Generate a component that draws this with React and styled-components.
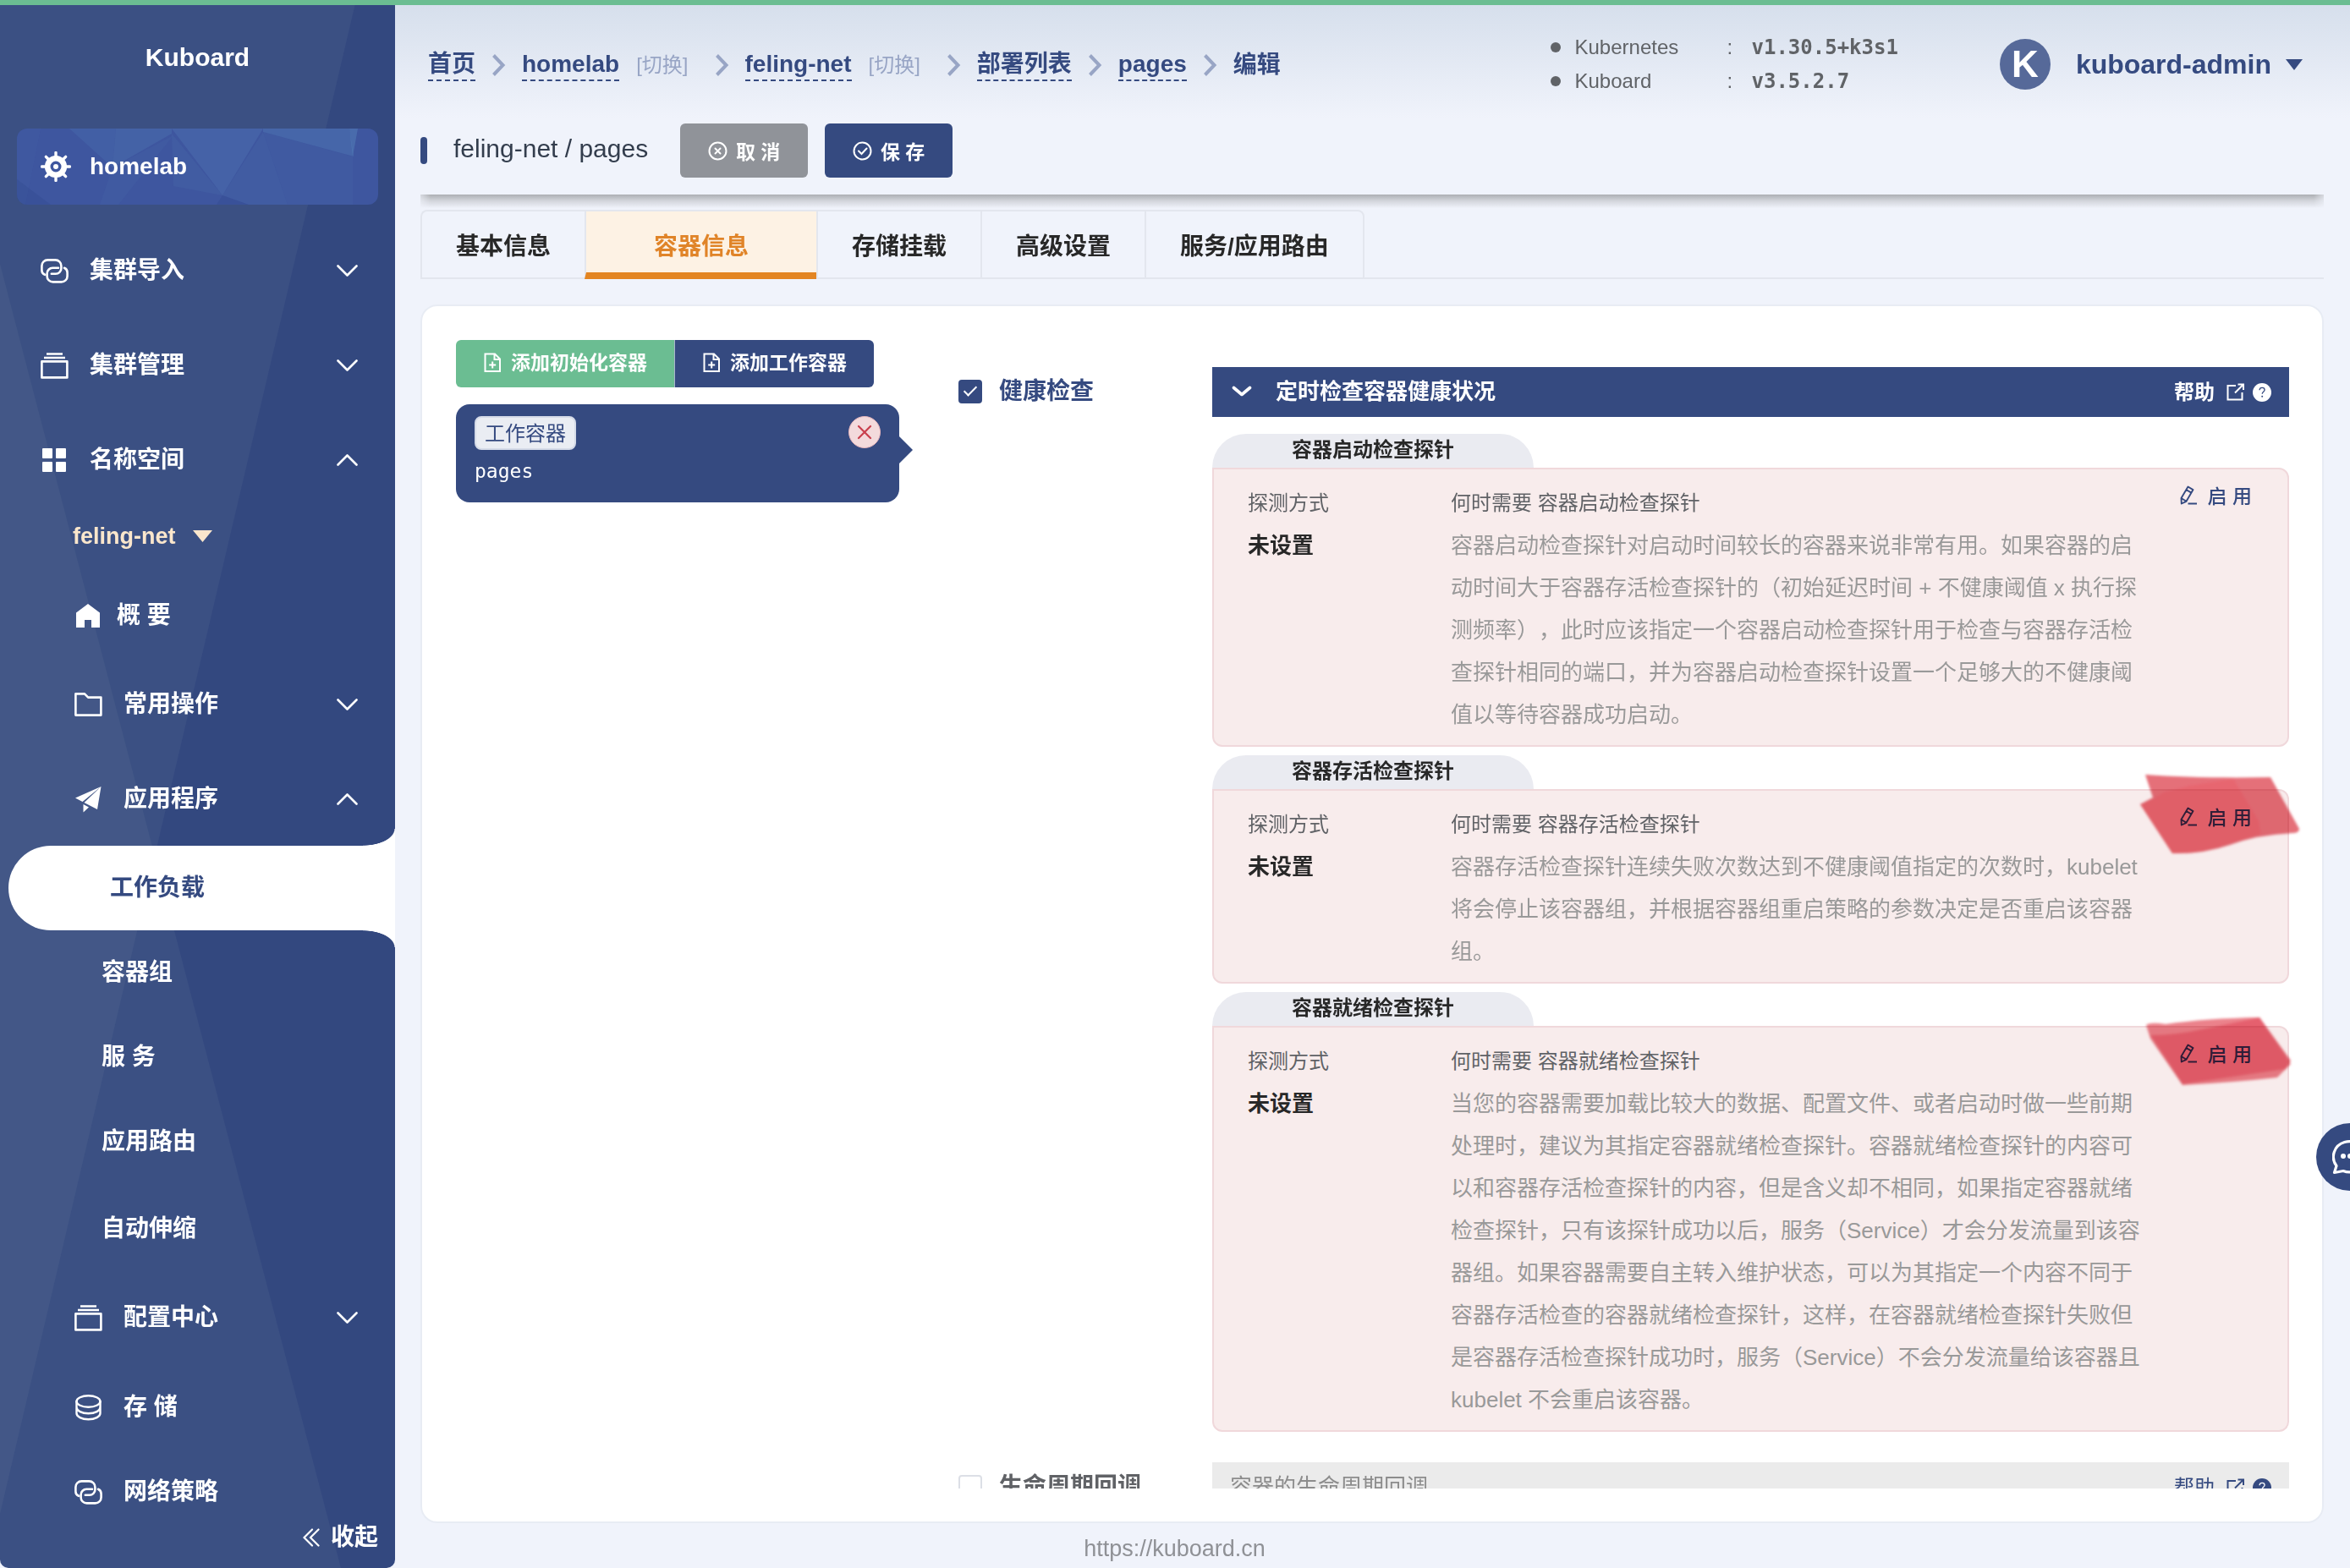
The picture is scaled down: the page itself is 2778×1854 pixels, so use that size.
import React from "react";
import styled, { createGlobalStyle, css } from "styled-components";

const navy = "#354a80";
const sans = `"Liberation Sans", "Noto Sans CJK SC", sans-serif`;
const mono = `"DejaVu Sans Mono", "Noto Sans CJK SC", monospace`;

const GlobalStyle = createGlobalStyle`
  *, *::before, *::after { box-sizing: border-box; }
  body {
    margin: 0;
    background: #f0f3fb;
    color: #282828;
    font-family: ${sans};
    text-spacing-trim: space-all;
  }
  a { color: inherit; text-decoration: none; }
  ul, p, h1, h2, h3 { margin: 0; padding: 0; }
  ul { list-style: none; }
  button { font-family: inherit; border: 0; margin: 0; padding: 0; background: none; cursor: pointer; }
  svg { display: block; flex: none; }
`;

/* ---------- shell ---------- */

const Page = styled.div`
  display: flex;
  flex-direction: column;
  height: 100vh;
  overflow: hidden;
`;

const TopStripe = styled.div`
  flex: none;
  height: 6px;
  background: #6bbd92;
`;

const Shell = styled.div`
  display: flex;
  flex: 1;
  min-height: 0;
`;

const Sidebar = styled.aside`
  position: relative;
  display: flex;
  flex-direction: column;
  flex: none;
  width: 467px;
  overflow: hidden;
  border-radius: 0 0 10px 10px;
  background: #33487f;
  color: #fff;
  font-size: 28px;
  font-weight: 700;
`;

const Facets = styled.svg`
  position: absolute;
  inset: 0;
  width: 100%;
  height: 100%;
`;

const Brand = styled.h1`
  position: relative;
  flex: none;
  padding-top: 42px;
  height: 146px;
  font-size: 30px;
  line-height: 40px;
  text-align: center;
`;

const ClusterLink = styled.a`
  position: relative;
  display: flex;
  align-items: center;
  gap: 22px;
  flex: none;
  height: 90px;
  margin: 0 20px 22px;
  padding-left: 28px;
  border-radius: 12px;
  overflow: hidden;
  background: #3e569f;
  > span, > svg:not(:first-child) { position: relative; }
`;

const Nav = styled.nav`
  position: relative;
  flex: 1;
  min-height: 0;
  overflow: hidden;
`;

const NavRow = styled.a`
  display: flex;
  align-items: center;
  height: ${(p) => p.$height || 112}px;
  padding: ${(p) => (p.$low ? 6 : 0)}px 44px 0 ${(p) => (p.$nested ? 88 : 48)}px;
  line-height: 40px;
`;

const IconSlot = styled.span`
  display: flex;
  justify-content: center;
  width: 32px;
  margin-right: ${(p) => p.$gap || 26}px;
`;

const NavLabel = styled.span`
  flex: 1;
`;

const Namespace = styled.button`
  display: flex;
  align-items: center;
  gap: 20px;
  width: 100%;
  height: 68px;
  margin-bottom: 6px;
  padding-left: 86px;
  color: #fae6cc;
  font-size: 27px;
  font-weight: 700;
`;

const SubLink = styled.a`
  position: relative;
  display: flex;
  align-items: center;
  height: ${(p) => p.$height || 100}px;
  padding-left: 120px;
  line-height: 40px;
  ${(p) =>
    p.$active &&
    css`
      margin-left: 10px;
      border-radius: 50px 0 0 50px;
      background: #fff;
      color: ${navy};
      &::before,
      &::after {
        content: "";
        position: absolute;
        right: 0;
        width: 38px;
        height: 20px;
      }
      &::before {
        bottom: 100%;
        background: radial-gradient(38px 20px at 0 0, transparent 97%, #fff 100%);
      }
      &::after {
        top: 100%;
        background: radial-gradient(38px 20px at 0 100%, transparent 97%, #fff 100%);
      }
    `}
`;

const Collapse = styled.button`
  position: relative;
  display: flex;
  align-items: center;
  justify-content: flex-end;
  gap: 13px;
  flex: none;
  height: 72px;
  padding-right: 20px;
  color: #fff;
  font-size: 28px;
  font-weight: 700;
  line-height: 40px;
`;

/* ---------- header ---------- */

const Main = styled.main`
  display: flex;
  flex-direction: column;
  flex: 1;
  min-width: 0;
  padding: 0 31px 0 30px;
  background: linear-gradient(#d6dfec, #f0f3fb 134px);
`;

const Header = styled.header`
  display: flex;
  align-items: center;
  flex: none;
  height: 140px;
  padding: 0 25px 0 9px;
`;

const Crumbs = styled.nav`
  display: flex;
  align-items: center;
  gap: 18px;
  flex: 1;
  padding-top: 2px;
  color: ${navy};
  font-size: 28px;
  font-weight: 700;
  line-height: 36px;
`;

const CrumbLink = styled.a`
  border-bottom: 2px dashed ${navy};
`;

const Switch = styled.button`
  padding: 0 12px 0 2px;
  color: #98a5c5;
  font-size: 24px;
  line-height: 36px;
`;

const Versions = styled.ul`
  margin-right: 120px;
  color: #606367;
  font-size: 24px;
  line-height: 40px;
`;

const VersionRow = styled.li`
  display: grid;
  grid-template-columns: 28px 180px 29px auto;
  align-items: center;
`;

const Dot = styled.i`
  width: 12px;
  height: 12px;
  border-radius: 50%;
  background: #606367;
`;

const VersionNumber = styled.b`
  font-family: ${mono};
`;

const UserMenu = styled.button`
  display: flex;
  align-items: center;
  gap: 17px;
  color: ${navy};
  font-size: 32px;
  font-weight: 700;
  line-height: 60px;
`;

const Avatar = styled.span`
  width: 60px;
  height: 60px;
  margin-right: 13px;
  border-radius: 50%;
  background: #566999;
  color: #fff;
  font-size: 44px;
  line-height: 60px;
  text-align: center;
`;

const TitleRow = styled.div`
  display: flex;
  align-items: center;
  gap: 20px;
  flex: none;
  height: 64px;
  margin-bottom: 20px;
`;

const Marker = styled.span`
  width: 8px;
  height: 32px;
  margin-right: 11px;
  border-radius: 4px;
  background: ${navy};
`;

const Title = styled.h2`
  margin-right: 18px;
  padding-bottom: 4px;
  color: #333d4d;
  font-size: 30px;
  font-weight: 400;
`;

const ActionButton = styled.button`
  display: flex;
  align-items: center;
  justify-content: center;
  gap: 10px;
  width: 151px;
  height: 64px;
  border-radius: 6px;
  background: ${(p) => (p.$primary ? navy : "#909399")};
  color: #fff;
  font-size: 23px;
  font-weight: 700;
`;

const Shade = styled.div`
  flex: none;
  height: 16px;
  margin-bottom: 2px;
  background: linear-gradient(#acaeb2, rgba(172, 174, 178, 0.45) 45%, rgba(172, 174, 178, 0));
  mask-image: linear-gradient(90deg, rgba(0, 0, 0, 0.4), #000 12px calc(100% - 12px), rgba(0, 0, 0, 0.4));
`;

const Tabs = styled.div`
  display: flex;
  flex: none;
  height: 82px;
  margin-bottom: 30px;
  border-bottom: 2px solid #e3e6ee;
`;

const Tab = styled.button`
  height: 82px;
  padding: 0 ${(p) => (p.$active ? 80 : 40)}px;
  border-top: 2px solid #e3e6ee;
  border-left: 2px solid #e3e6ee;
  border-bottom: 2px solid #e3e6ee;
  color: #282828;
  font-size: 28px;
  font-weight: 700;
  &:first-child { border-top-left-radius: 8px; }
  &:last-child { border-right: 2px solid #e3e6ee; border-top-right-radius: 8px; }
  ${(p) =>
    p.$active &&
    css`
      padding-top: 6px;
      border-bottom: 8px solid #e38522;
      background: #fdf2e4;
      color: #e08428;
    `}
`;

/* ---------- card ---------- */

const Card = styled.section`
  flex: 1;
  min-height: 0;
  padding: 40px 19px 39px 40px;
  border: 2px solid #e8ecf4;
  border-radius: 20px;
  background: #fff;
`;

const CardScroll = styled.div`
  display: grid;
  grid-template-columns: 524px minmax(0, 1fr);
  column-gap: 70px;
  height: 100%;
  padding-right: 20px;
  overflow: hidden;
`;

const AddButtons = styled.div`
  display: flex;
  margin-bottom: 20px;
`;

const AddButton = styled.button`
  display: flex;
  align-items: center;
  gap: 10px;
  height: 56px;
  padding: 0 32px;
  border-radius: ${(p) => (p.$init ? "6px 0 0 6px" : "0 6px 6px 0")};
  border-right: ${(p) => (p.$init ? "1px solid #a9b6cc" : "0")};
  background: ${(p) => (p.$init ? "#6bbd92" : navy)};
  color: #fff;
  font-size: 23px;
  font-weight: 700;
  line-height: 30px;
  padding-bottom: 2px;
  white-space: nowrap;
`;

const ContainerItem = styled.div`
  position: relative;
  display: flex;
  justify-content: space-between;
  align-items: flex-start;
  height: 116px;
  padding: 14px 22px;
  border-radius: 16px;
  background: ${navy};
  &::after {
    content: "";
    position: absolute;
    left: 100%;
    top: 38px;
    border: 16px solid transparent;
    border-right: 0;
    border-left-color: ${navy};
  }
`;

const ContainerTag = styled.span`
  display: block;
  height: 40px;
  padding: 0 10px;
  border: 2px solid #d5dbe8;
  border-radius: 8px;
  background: #eaedf3;
  color: ${navy};
  font-size: 24px;
  line-height: 38px;
`;

const ContainerName = styled.p`
  color: #fff;
  font-family: ${mono};
  font-size: 23px;
  line-height: 50px;
`;

const RemoveButton = styled.button`
  display: flex;
  align-items: center;
  justify-content: center;
  width: 38px;
  height: 38px;
  border: 1px solid #e9b7bc;
  border-radius: 50%;
  background: #f3dadc;
  color: #c9404e;
`;

const Form = styled.div`
  padding-top: 32px;
`;

const FormRow = styled.div`
  display: grid;
  grid-template-columns: 300px minmax(0, 1fr);
  align-items: start;
  margin-bottom: 36px;
`;

const CheckLabel = styled.label`
  display: flex;
  align-items: center;
  gap: 20px;
  height: 58px;
  color: ${(p) => (p.$on ? navy : "#606266")};
  font-size: 28px;
  font-weight: 700;
  line-height: 40px;
`;

const CheckBox = styled.input`
  appearance: none;
  position: relative;
  width: 28px;
  height: 28px;
  margin: 0;
  border: 2px solid #dcdfe6;
  border-radius: 4px;
  background: #fff;
  &:checked { border-color: ${navy}; background: ${navy}; }
  &:checked::after {
    content: "";
    position: absolute;
    left: 8px;
    top: 2px;
    width: 8px;
    height: 15px;
    border: solid #fff;
    border-width: 0 2px 2px 0;
    transform: rotate(45deg);
  }
`;

const SectionBar = styled.div`
  display: flex;
  align-items: center;
  height: 59px;
  padding: 0 21px;
  background: ${(p) => (p.$open ? navy : "#ebebeb")};
  color: ${(p) => (p.$open ? "#fff" : "#8c8c8c")};
  font-size: 26px;
  font-weight: ${(p) => (p.$open ? 700 : 400)};
`;

const SectionToggle = styled.button`
  display: flex;
  align-items: center;
  gap: 28px;
  flex: 1;
  padding: 0 0 2px ${(p) => (p.$open ? 2 : 0)}px;
  color: inherit;
  font: inherit;
  line-height: 40px;
  text-align: left;
`;

const HelpLink = styled.a`
  display: flex;
  align-items: center;
  color: ${(p) => (p.$open ? "#fff" : navy)};
  font-size: 24px;
  line-height: 40px;
  gap: 14px;
`;

const HelpBadge = styled.span`
  display: flex;
  margin-left: -4px;
`;

const ProbeTitle = styled.h3`
  width: 380px;
  height: 40px;
  margin-top: ${(p) => (p.$first ? 20 : 10)}px;
  border-radius: 40px 40px 0 0;
  background: #eaebf1;
  font-size: 24px;
  line-height: 38px;
  text-align: center;
`;

const ProbeBox = styled.div`
  position: relative;
  display: grid;
  grid-template-columns: 240px minmax(0, 1fr) auto;
  padding: 15px 42px 11px 40px;
  border: 2px solid #f0d8db;
  border-radius: 0 12px 12px 12px;
  background: #f8ecec;
  line-height: 50px;
`;

const Caption = styled.p`
  color: #606266;
  font-size: 24px;
  line-height: 50px;
`;

const Unset = styled.p`
  font-size: 26px;
  font-weight: 700;
`;

const Explain = styled.p`
  color: #999;
  font-size: 26px;
`;

const EnableButton = styled.button`
  display: flex;
  align-items: center;
  gap: 13px;
  height: 30px;
  margin-left: 38px;
  color: ${navy};
  font-size: 23px;
  font-weight: 500;
`;

const Smear = styled.svg`
  position: absolute;
  right: -18px;
  top: ${(p) => p.$top}px;
  mix-blend-mode: multiply;
  pointer-events: none;
`;

const Footer = styled.footer`
  flex: none;
  height: 53px;
  padding-right: 467px;
  color: #8f9196;
  font-size: 27px;
  line-height: 60px;
  text-align: center;
`;

const ChatButton = styled.button`
  position: fixed;
  right: 0;
  top: 1328px;
  width: 40px;
  height: 80px;
  padding-left: 19px;
  border-radius: 40px 0 0 40px;
  background: ${navy};
  overflow: hidden;
  color: #fff;
`;

/* ---------- icons ---------- */

const HelmIcon = () => (
  <svg width="36" height="36" viewBox="-18 -18 36 36" fill="none" stroke="#fff" strokeLinecap="round">
    {[0, 45, 90, 135].map((a) => (
      <path key={a} d="M0 -16.5V-11M0 16.5V11" strokeWidth="3.4" transform={`rotate(${a})`} />
    ))}
    <circle r="9.8" strokeWidth="6.6" />
    <circle r="3" fill="#fff" stroke="none" />
  </svg>
);

const LinkIcon = () => (
  <svg width="33" height="29" viewBox="0 0 33 29" fill="none" stroke="currentColor" strokeWidth="2.6" strokeLinecap="round">
    <path d="M5 18.8C2.6 17.8 1.4 15.8 1.4 13.4V8.4a7 7 0 0 1 7-7h9a7 7 0 0 1 7 7v2.8a6.6 6.6 0 0 1-6.6 6.6h-5" />
    <path d="M21 10.8h-6.800a6.600 6.600 0 0 0-6.600 6.600v3a7 7 0 0 0 7 7h10a7 7 0 0 0 7-7v-4.200c0-2.400-1.200-4.400-3.600-5.400" />
  </svg>
);

const FilesIcon = () => (
  <svg width="33" height="31" viewBox="0 0 33 31" fill="none" stroke="currentColor" strokeWidth="2.6" strokeLinejoin="round">
    <path d="M1.400 10.400h30v19h-30zM4 6h25M7 1.500h19" />
  </svg>
);

const GridIcon = () => (
  <svg width="28" height="28" viewBox="0 0 28 28" fill="currentColor">
    <rect width="12" height="12" rx="1" />
    <rect x="16" width="12" height="12" rx="1" />
    <rect y="16" width="12" height="12" rx="1" />
    <rect x="16" y="16" width="12" height="12" rx="1" />
  </svg>
);

const HomeIcon = () => (
  <svg width="28" height="28" viewBox="0 0 28 28" fill="currentColor">
    <path d="M14 0L28 10.500V28H18V19h-8v9H0V10.500z" />
  </svg>
);

const FolderIcon = () => (
  <svg width="33" height="28" viewBox="0 0 33 28" fill="none" stroke="currentColor" strokeWidth="2.6" strokeLinejoin="round">
    <path d="M1.400 1.400h10.600l4.200 4.200h15.200v21H1.400z" />
  </svg>
);

const PlaneIcon = () => (
  <svg width="31" height="31" viewBox="0 0 31 31" fill="currentColor">
    <path d="M0 13.500L30.500 0 8.500 18zM10.500 19L30.500 0 26 27zM9.500 21l6.500 3.500-6.500 6z" />
  </svg>
);

const CoinIcon = () => (
  <svg width="31" height="31" viewBox="0 0 31 31" fill="none" stroke="currentColor" strokeWidth="2.400" strokeLinecap="round">
    <ellipse cx="15.500" cy="8" rx="14" ry="6.700" />
    <path d="M1.500 8v14c0 4 6 7.200 14 7.200s14-3.200 14-7.200V8M1.500 15c0 4 6 7.200 14 7.200s14-3.200 14-7.200" />
  </svg>
);

const Chevron = ({ up }) => (
  <svg width="25" height="14" viewBox="0 0 25 14" fill="none" stroke="currentColor" strokeWidth="2.6" strokeLinecap="round" strokeLinejoin="round">
    <path d={up ? "M1.500 12.500l11-11 11 11" : "M1.500 1.500l11 11 11-11"} />
  </svg>
);

const Caret = ({ width, height }) => (
  <svg width={width} height={height} viewBox="0 0 20 12" preserveAspectRatio="none" fill="currentColor">
    <path d="M0 0h20L10 12z" />
  </svg>
);

const DoubleLeftIcon = () => (
  <svg width="20" height="22" viewBox="0 0 20 22" fill="none" stroke="currentColor" strokeWidth="2.200" strokeLinecap="round">
    <path d="M11 1.500L1.500 11l9.500 9.500M18.500 1.500L9 11l9.500 9.500" />
  </svg>
);

const Separator = () => (
  <svg width="19" height="26" viewBox="0 0 19 26" fill="none" stroke="#98a5c5" strokeWidth="4">
    <path d="M3.500 1.500L14.500 13 3.500 24.500" />
  </svg>
);

const RoundIcon = ({ children }) => (
  <svg width="23" height="23" viewBox="0 0 23 23" fill="none" stroke="currentColor" strokeWidth="2" strokeLinecap="round">
    <circle cx="11.500" cy="11.500" r="10" />
    {children}
  </svg>
);

const DocAddIcon = () => (
  <svg width="23" height="24" viewBox="0 0 23 24" fill="none" stroke="currentColor" strokeWidth="2">
    <path d="M2.500 1.500h11.500l6 6v14.500H2.500zM13.500 1.500v6.500h6.500M11.200 10.500v8M7.200 14.500h8" />
  </svg>
);

const CrossIcon = () => (
  <svg width="18" height="18" viewBox="0 0 18 18" fill="none" stroke="currentColor" strokeWidth="2.200" strokeLinecap="round">
    <path d="M2 2l14 14M16 2L2 16" />
  </svg>
);

const BarChevron = () => (
  <svg width="24" height="13" viewBox="0 0 24 13" fill="none" stroke="currentColor" strokeWidth="3.600" strokeLinecap="round" strokeLinejoin="round">
    <path d="M2.500 2.500l9.500 8 9.500-8" />
  </svg>
);

const ExternalIcon = () => (
  <svg width="21" height="21" viewBox="0 0 21 21" fill="none" stroke="currentColor" strokeWidth="2">
    <path d="M11 3H1.500v16.500h17V11M13.500 1.500h6.500v6.500M19.500 2L10 11.500" />
  </svg>
);

const QuestionIcon = ({ mark }) => (
  <svg width="22" height="22" viewBox="0 0 22 22" fill="currentColor">
    <circle cx="11" cy="11" r="11" />
    <path d="M8 8.200c.2-2 1.500-2.900 3.100-2.900s3 1 3 2.700c0 2.200-2.900 2.300-2.900 4.800" fill="none" stroke={mark} strokeWidth="1.300" />
    <circle cx="11.200" cy="15.800" r="1" fill={mark} />
  </svg>
);

const EditIcon = () => (
  <svg width="20" height="23" viewBox="0 0 20 23" fill="none" stroke="currentColor" strokeWidth="1.900" strokeLinejoin="round">
    <path d="M9.500 1.500l6 3.600L7.500 18.800 1.800 21.500 1.500 15zM7.400 5l6 3.600M1.500 15l6 3.800M9.500 21.500h10.500" />
  </svg>
);

const ChatIcon = () => (
  <svg width="42" height="42" viewBox="0 0 42 42" fill="none" stroke="currentColor" strokeWidth="3.200" strokeLinejoin="round">
    <path d="M2.500 39.500L5 31.500A18.500 18 0 1 1 13 37.500z" />
    <g fill="currentColor" stroke="none">
      <circle cx="13" cy="20" r="3" />
      <circle cx="21" cy="20" r="3" />
      <circle cx="29" cy="20" r="3" />
    </g>
  </svg>
);

const SidebarFacets = () => (
  <Facets viewBox="0 6 467 1848" preserveAspectRatio="none" fill="#d3e8cf" fillOpacity="0.05" aria-hidden="true">
    <path d="M0 0H421L0 1790z" />
    <path d="M0 312L403 1854H0z" />
  </Facets>
);

const ClusterFacets = () => (
  <Facets viewBox="0 0 427 90" preserveAspectRatio="none" fill="#5b8cc0" aria-hidden="true">
    <path d="M0 0h28L10 90H0z" fillOpacity="0.05" />
    <path d="M62 0h55l-4 46z" fillOpacity="0.18" />
    <path d="M117 0h66v6L113 46z" fillOpacity="0.22" />
    <path d="M183 0h108l-48 79z" fillOpacity="0.24" />
    <path d="M183 6L243 79 185 68z" fillOpacity="0.12" />
    <path d="M291 0h102l5 33L291 4z" fillOpacity="0.3" />
    <path d="M291 4L397 33V90H320z" fillOpacity="0.08" />
    <path d="M291 4l29 86H274l-31-11z" fillOpacity="0.12" />
    <path d="M393 0h10l-6 33z" fillOpacity="0.4" />
    <path d="M113 46L185 8 120 90H98z" fillOpacity="0.08" />
    <path d="M0 90V60L40 90zM243 79l31 11h-38z" fill="#2c4488" fillOpacity="0.25" />
  </Facets>
);

const LiveSmear = () => (
  <Smear $top={-28} width="204" height="114" viewBox="0 0 204 114" aria-hidden="true">
    <filter id="soft-live" x="-5%" y="-5%" width="110%" height="110%">
      <feGaussianBlur stdDeviation="1.6" />
    </filter>
    <g filter="url(#soft-live)">
      <path d="M18 9C60 12 110 13 166 12L200 73Q200 78 192 78 150 80 118 92 86 103 50 102L12 44 27 36z" fill="#e56f79" />
      <path d="M27 38L12 44 50 102Q80 103 112 92L154 79 152 64 122 14 70 22 40 30z" fill="#e8606b" fillOpacity="0.6" />
    </g>
  </Smear>
);

const ReadySmear = () => (
  <Smear $top={-21} width="204" height="104" viewBox="0 0 204 104" aria-hidden="true">
    <filter id="soft-ready" x="-5%" y="-5%" width="110%" height="110%">
      <feGaussianBlur stdDeviation="1.6" />
    </filter>
    <g filter="url(#soft-ready)">
      <path d="M19 18Q24 14 42 17 90 10 153 9L190 64 174 80Q120 86 62 89L24 34z" fill="#eb828b" />
      <path d="M24 30Q54 30 90 22L153 9 190 60 184 70 130 78 62 88z" fill="#e45c68" fillOpacity="0.85" />
    </g>
  </Smear>
);

/* ---------- data ---------- */

const subLinks = [
  { text: "容器组" },
  { text: "服 务" },
  { text: "应用路由" },
  { text: "自动伸缩", height: 106 },
];

const tabs = ["基本信息", "容器信息", "存储挂载", "高级设置", "服务/应用路由"];

const probes = [
  {
    name: "容器启动检查探针",
    text: "容器启动检查探针对启动时间较长的容器来说非常有用。如果容器的启动时间大于容器存活检查探针的（初始延迟时间 + 不健康阈值 x 执行探测频率），此时应该指定一个容器启动检查探针用于检查与容器存活检查探针相同的端口，并为容器启动检查探针设置一个足够大的不健康阈值以等待容器成功启动。",
  },
  {
    name: "容器存活检查探针",
    text: "容器存活检查探针连续失败次数达到不健康阈值指定的次数时，kubelet 将会停止该容器组，并根据容器组重启策略的参数决定是否重启该容器组。",
    smear: <LiveSmear />,
  },
  {
    name: "容器就绪检查探针",
    text: "当您的容器需要加载比较大的数据、配置文件、或者启动时做一些前期处理时，建议为其指定容器就绪检查探针。容器就绪检查探针的内容可以和容器存活检查探针的内容，但是含义却不相同，如果指定容器就绪检查探针，只有该探针成功以后，服务（Service）才会分发流量到该容器组。如果容器需要自主转入维护状态，可以为其指定一个内容不同于容器存活检查的容器就绪检查探针，这样，在容器就绪检查探针失败但是容器存活检查探针成功时，服务（Service）不会分发流量给该容器且 kubelet 不会重启该容器。",
    smear: <ReadySmear />,
  },
];

/* ---------- page parts ---------- */

function MenuRow({ icon, text, chevron, gap, ...row }) {
  return (
    <NavRow href="#" {...row}>
      <IconSlot $gap={gap}>{icon}</IconSlot>
      <NavLabel>{text}</NavLabel>
      {chevron && <Chevron up={chevron === "up"} />}
    </NavRow>
  );
}

function Help({ open }) {
  return (
    <HelpLink href="#" $open={open}>
      帮助
      <ExternalIcon />
      <HelpBadge>
        <QuestionIcon mark={open ? navy : "#fff"} />
      </HelpBadge>
    </HelpLink>
  );
}

function Probe({ probe, first }) {
  return (
    <>
      <ProbeTitle $first={first}>{probe.name}</ProbeTitle>
      <ProbeBox>
        <div>
          <Caption>探测方式</Caption>
          <Unset>未设置</Unset>
        </div>
        <div>
          <Caption>何时需要 {probe.name}</Caption>
          <Explain>{probe.text}</Explain>
        </div>
        <EnableButton type="button">
          <EditIcon />
          启 用
        </EnableButton>
        {probe.smear}
      </ProbeBox>
    </>
  );
}

export default function App() {
  return (
    <Page lang="zh-CN">
      <GlobalStyle />
      <TopStripe />
      <Shell>
        <Sidebar>
          <SidebarFacets />
          <Brand>Kuboard</Brand>
          <ClusterLink href="#">
            <ClusterFacets />
            <HelmIcon />
            <span>homelab</span>
          </ClusterLink>
          <Nav>
            <MenuRow icon={<LinkIcon />} text="集群导入" chevron="down" />
            <MenuRow icon={<FilesIcon />} text="集群管理" chevron="down" />
            <MenuRow icon={<GridIcon />} text="名称空间" chevron="up" />
            <Namespace type="button">
              feling-net
              <Caret width={23} height={14} />
            </Namespace>
            <MenuRow icon={<HomeIcon />} text="概 要" gap={18} $nested $height={108} />
            <MenuRow icon={<FolderIcon />} text="常用操作" chevron="down" $nested $height={102} />
            <MenuRow icon={<PlaneIcon />} text="应用程序" chevron="up" $nested $low $height={116} />
            <SubLink href="#" $active>
              工作负载
            </SubLink>
            {subLinks.map((s) => (
              <SubLink href="#" key={s.text} $height={s.height}>
                {s.text}
              </SubLink>
            ))}
            <MenuRow icon={<FilesIcon />} text="配置中心" chevron="down" $nested $height={104} />
            <MenuRow icon={<CoinIcon />} text="存 储" $nested $height={108} />
            <MenuRow icon={<LinkIcon />} text="网络策略" $nested $height={92} />
          </Nav>
          <Collapse type="button">
            <DoubleLeftIcon />
            收起
          </Collapse>
        </Sidebar>

        <Main>
          <Header>
            <Crumbs>
              <CrumbLink href="#">首页</CrumbLink>
              <Separator />
              <CrumbLink href="#">homelab</CrumbLink>
              <Switch type="button">[切换]</Switch>
              <Separator />
              <CrumbLink href="#">feling-net</CrumbLink>
              <Switch type="button">[切换]</Switch>
              <Separator />
              <CrumbLink href="#">部署列表</CrumbLink>
              <Separator />
              <CrumbLink href="#">pages</CrumbLink>
              <Separator />
              <span>编辑</span>
            </Crumbs>
            <Versions>
              <VersionRow>
                <Dot />
                <span>Kubernetes</span>
                <span>:</span>
                <VersionNumber>v1.30.5+k3s1</VersionNumber>
              </VersionRow>
              <VersionRow>
                <Dot />
                <span>Kuboard</span>
                <span>:</span>
                <VersionNumber>v3.5.2.7</VersionNumber>
              </VersionRow>
            </Versions>
            <UserMenu type="button">
              <Avatar>K</Avatar>
              kuboard-admin
              <Caret width={20} height={13} />
            </UserMenu>
          </Header>

          <TitleRow>
            <Marker />
            <Title>feling-net / pages</Title>
            <ActionButton type="button">
              <RoundIcon>
                <path d="M8.500 8.500l6 6M14.500 8.500l-6 6" />
              </RoundIcon>
              取 消
            </ActionButton>
            <ActionButton type="button" $primary>
              <RoundIcon>
                <path d="M7 11.500l3.500 3.500 6-6.500" />
              </RoundIcon>
              保 存
            </ActionButton>
          </TitleRow>
          <Shade />

          <Tabs role="tablist">
            {tabs.map((t, i) => (
              <Tab key={t} type="button" role="tab" aria-selected={i === 1} $active={i === 1}>
                {t}
              </Tab>
            ))}
          </Tabs>

          <Card>
            <CardScroll>
              <div>
                <AddButtons>
                  <AddButton type="button" $init>
                    <DocAddIcon />
                    添加初始化容器
                  </AddButton>
                  <AddButton type="button">
                    <DocAddIcon />
                    添加工作容器
                  </AddButton>
                </AddButtons>
                <ContainerItem>
                  <div>
                    <ContainerTag>工作容器</ContainerTag>
                    <ContainerName>pages</ContainerName>
                  </div>
                  <RemoveButton type="button" aria-label="删除">
                    <CrossIcon />
                  </RemoveButton>
                </ContainerItem>
              </div>

              <Form>
                <FormRow>
                  <CheckLabel $on>
                    <CheckBox type="checkbox" defaultChecked />
                    健康检查
                  </CheckLabel>
                  <div>
                    <SectionBar $open>
                      <SectionToggle type="button" $open>
                        <BarChevron />
                        定时检查容器健康状况
                      </SectionToggle>
                      <Help open />
                    </SectionBar>
                    {probes.map((p, i) => (
                      <Probe key={p.name} probe={p} first={i === 0} />
                    ))}
                  </div>
                </FormRow>
                <FormRow>
                  <CheckLabel>
                    <CheckBox type="checkbox" />
                    生命周期回调
                  </CheckLabel>
                  <SectionBar>
                    <SectionToggle type="button">容器的生命周期回调</SectionToggle>
                    <Help />
                  </SectionBar>
                </FormRow>
              </Form>
            </CardScroll>
          </Card>

          <Footer>
            <a href="#">https://kuboard.cn</a>
          </Footer>
        </Main>
      </Shell>
      <ChatButton type="button" aria-label="聊天">
        <ChatIcon />
      </ChatButton>
    </Page>
  );
}
